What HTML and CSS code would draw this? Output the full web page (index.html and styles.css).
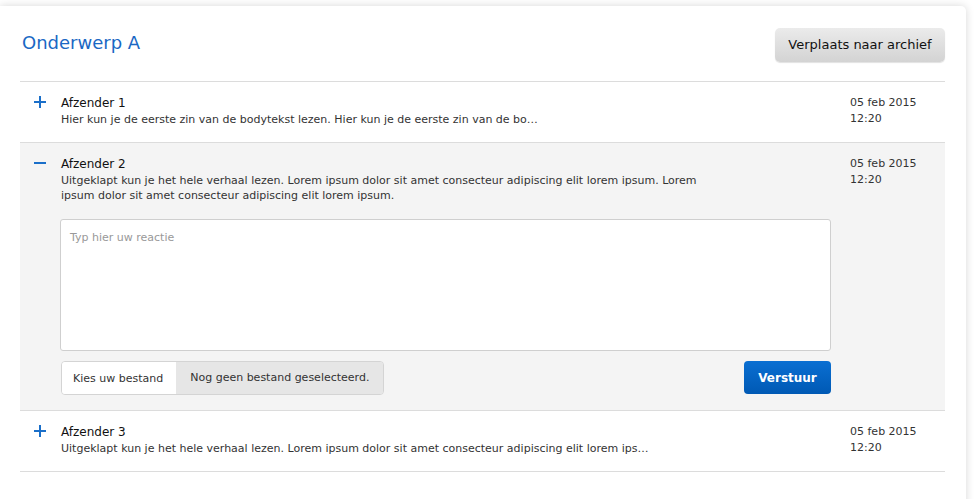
FILE: index.html
```html
<!DOCTYPE html>
<html lang="nl">
<head>
<meta charset="utf-8">
<title>Onderwerp A</title>
<link rel="stylesheet" href="styles.css">
</head>
<body>
<div class="card">
  <div class="header">
    <h1 class="title">Onderwerp A</h1>
    <button class="btn-archive" type="button">Verplaats naar archief</button>
  </div>

  <div class="msg">
    <div class="toggle"><svg width="12" height="12" viewBox="0 0 12 12"><path d="M0 6H12M6 0V12" stroke="#1a6fc9" stroke-width="2"/></svg></div>
    <div class="content">
      <div class="sender">Afzender 1</div>
      <div class="body">Hier kun je de eerste zin van de bodytekst lezen. Hier kun je de eerste zin van de bo…</div>
    </div>
    <div class="date">05 feb 2015<br>12:20</div>
  </div>

  <div class="msg open">
    <div class="toggle"><svg width="12" height="12" viewBox="0 0 12 12"><path d="M0 6H12" stroke="#1a6fc9" stroke-width="2"/></svg></div>
    <div class="content">
      <div class="sender">Afzender 2</div>
      <div class="body wrap">Uitgeklapt kun je het hele verhaal lezen. Lorem ipsum dolor sit amet consecteur adipiscing elit lorem ipsum. Lorem ipsum dolor sit amet consecteur adipiscing elit lorem ipsum.</div>
      <textarea class="reply" placeholder="Typ hier uw reactie"></textarea>
      <div class="actions">
        <div class="file">
          <span class="file-btn">Kies uw bestand</span>
          <span class="file-name">Nog geen bestand geselecteerd.</span>
        </div>
        <button class="btn-send" type="button">Verstuur</button>
      </div>
    </div>
    <div class="date">05 feb 2015<br>12:20</div>
  </div>

  <div class="msg">
    <div class="toggle"><svg width="12" height="12" viewBox="0 0 12 12"><path d="M0 6H12M6 0V12" stroke="#1a6fc9" stroke-width="2"/></svg></div>
    <div class="content">
      <div class="sender">Afzender 3</div>
      <div class="body">Uitgeklapt kun je het hele verhaal lezen. Lorem ipsum dolor sit amet consecteur adipiscing elit lorem ips…</div>
    </div>
    <div class="date">05 feb 2015<br>12:20</div>
  </div>
</div>
</body>
</html>
```

FILE: styles.css
```css
html, body {
  margin: 0;
  padding: 0;
  background: #ffffff;
}
body {
  font-family: "DejaVu Sans", Verdana, sans-serif;
  color: #222;
  padding-top: 6px;
  height: 493px;
  overflow: hidden;
}
.card {
  width: 925px;
  padding: 0 21px 40px 20px;
  background: #fff;
  border-radius: 0 5px 0 0;
  box-shadow: 0 0 8px rgba(0, 0, 0, 0.16);
}
.header {
  height: 75px;
  display: flex;
  align-items: center;
  justify-content: space-between;
  padding-left: 2px;
  border-bottom: 1px solid #dcdcdc;
}
.title {
  margin: 0 0 2px 0;
  font-size: 18px;
  font-weight: normal;
  color: #1a68c4;
}
.btn-archive {
  width: 170px;
  height: 34px;
  margin-top: 2px;
  font-family: "DejaVu Sans", Verdana, sans-serif;
  font-size: 13px;
  color: #111;
  border: none;
  border-radius: 5px;
  background: linear-gradient(#ebebeb, #d3d3d3);
  box-shadow: 0 1px 1px rgba(0, 0, 0, 0.12);
  padding: 0;
}
.msg {
  display: grid;
  grid-template-columns: 41px 770px auto;
  padding: 12px 0 15px 0;
  border-bottom: 1px solid #dcdcdc;
}
.msg.open {
  background: #f4f4f4;
}
.toggle {
  padding: 2px 0 0 14px;
  line-height: 0;
}
.sender {
  font-size: 12px;
  line-height: 16px;
  color: #111;
  padding-top: 1px;
}
.body {
  margin-top: 1px;
  font-size: 11px;
  line-height: 15px;
  color: #333;
  white-space: nowrap;
}
.body.wrap {
  white-space: normal;
  max-width: 660px;
}
.date {
  font-size: 11px;
  line-height: 16px;
  color: #333;
  padding: 1px 0 0 19px;
}
.reply {
  display: block;
  box-sizing: border-box;
  width: 771px;
  height: 132px;
  margin: 16px 0 0 -1px;
  padding: 11px 9px;
  border: 1px solid #cfcfcf;
  border-radius: 3px;
  background: #fff;
  font-family: "DejaVu Sans", Verdana, sans-serif;
  font-size: 11px;
  color: #333;
  resize: none;
  outline: none;
}
.reply::placeholder {
  color: #999;
}
.actions {
  display: flex;
  justify-content: space-between;
  align-items: flex-start;
  margin-top: 10px;
}
.file {
  display: flex;
  height: 34px;
  box-sizing: border-box;
  border: 1px solid #d4d4d4;
  border-radius: 4px;
  overflow: hidden;
  font-size: 11px;
  color: #333;
  white-space: nowrap;
}
.file-btn {
  display: flex;
  align-items: center;
  padding: 1px 13px 0 11px;
  background: #fff;
}
.file-name {
  display: flex;
  align-items: center;
  padding: 0 14px 2px 14px;
  background: #e6e6e6;
}
.btn-send {
  width: 87px;
  height: 33px;
  padding: 0;
  border: none;
  border-radius: 4px;
  background: linear-gradient(#0a6fd2, #0059b4);
  color: #fff;
  font-family: "DejaVu Sans", Verdana, sans-serif;
  font-size: 12px;
  font-weight: bold;
}
```
